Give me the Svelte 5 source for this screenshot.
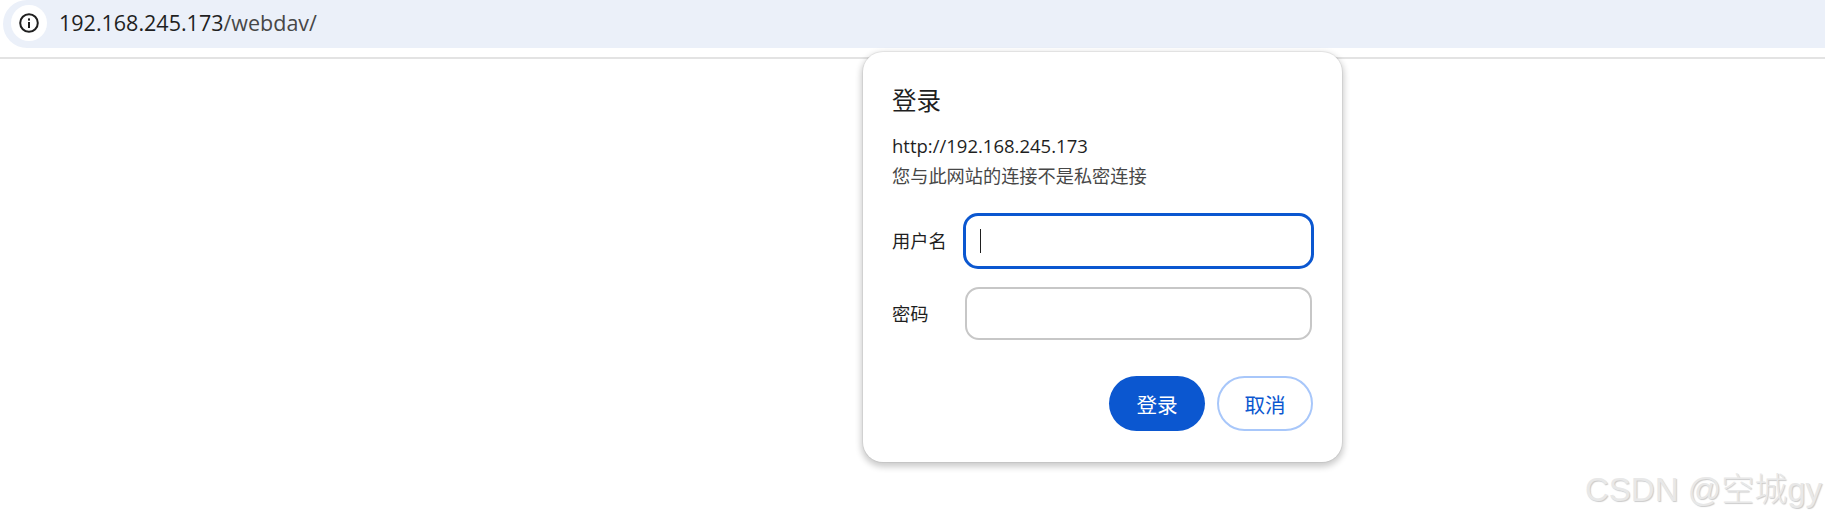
<script>
  const fields = [
    { label: '用户名', focused: true },
    { label: '密码', focused: false }
  ];
</script>

<div class="page">
  <header class="toolbar">
    <div class="omnibox">
      <span class="chip">
        <svg width="24" height="24" viewBox="0 0 24 24" fill="none" aria-hidden="true">
          <circle cx="12" cy="12" r="8.8" stroke="#1f1f1f" stroke-width="2" />
          <rect x="11" y="11" width="2" height="6" fill="#1f1f1f" />
          <rect x="11" y="7.4" width="2" height="2.2" fill="#1f1f1f" />
        </svg>
      </span>
      <span class="url"><span class="host">192.168.245.173</span><span class="path">/webdav/</span></span>
    </div>
  </header>

  <section class="dialog">
    <h1>登录</h1>
    <p class="origin">http://192.168.245.173</p>
    <p class="note">您与此网站的连接不是私密连接</p>
    <div class="fields">
      {#each fields as f}
        <div class="row">
          <span class="label">{f.label}</span>
          <div class="input" class:focused={f.focused}>
            {#if f.focused}<span class="caret"></span>{/if}
          </div>
        </div>
      {/each}
    </div>
    <div class="actions">
      <button class="primary">登录</button>
      <button class="secondary">取消</button>
    </div>
  </section>

  <div class="watermark">CSDN @空城gy</div>
</div>

<style>
  :global(body) {
    margin: 0;
    background: #fff;
  }
  .page {
    position: relative;
    width: 1825px;
    height: 523px;
    overflow: hidden;
    font-family: "Open Sans", "Noto Sans CJK SC", sans-serif;
    color: #1f1f1f;
  }
  .toolbar {
    height: 57px;
    border-bottom: 2px solid #e3e3e3;
    padding-left: 3px;
  }
  .omnibox {
    height: 48px;
    background: #ebf0f9;
    border-radius: 24px 0 0 24px;
    display: flex;
    align-items: center;
    padding-left: 8px;
  }
  .chip {
    width: 36px;
    height: 36px;
    margin-top: -2px;
    border-radius: 50%;
    background: #fff;
    display: flex;
    align-items: center;
    justify-content: center;
  }
  .url {
    margin: -2px 0 0 12px;
    font-size: 21.5px;
    line-height: 28px;
  }
  .host { color: #1f1f1f; }
  .path { color: #474747; }

  .dialog {
    position: absolute;
    left: 863px;
    top: 52px;
    width: 479px;
    height: 410px;
    box-sizing: border-box;
    padding: 33px 29px 0 29px;
    background: #fff;
    border-radius: 20px;
    box-shadow: 0 0 0 1px rgba(0, 0, 0, 0.05), 0 3px 6px 2px rgba(0, 0, 0, 0.2);
  }
  h1 {
    margin: 0;
    font-size: 24.5px;
    line-height: 32px;
    font-weight: 400;
  }
  p { margin: 0; }
  .origin {
    margin-top: 16px;
    font-size: 18.5px;
    line-height: 26px;
  }
  .note {
    margin-top: 4px;
    font-size: 18.2px;
    line-height: 26px;
    color: #474747;
  }
  .fields {
    margin-top: 25px;
    display: flex;
    flex-direction: column;
    gap: 19.5px;
  }
  .row {
    display: flex;
    align-items: flex-start;
    height: 53px;
  }
  .label {
    width: 73px;
    font-size: 18.3px;
    line-height: 53px;
  }
  .input {
    width: 347px;
    height: 53px;
    box-sizing: border-box;
    border: 2px solid #c7c7c7;
    border-radius: 14px;
    display: flex;
    align-items: center;
    padding-left: 14px;
  }
  .input.focused {
    width: 351px;
    height: 56px;
    margin: -1px -2px 0 -2px;
    border: 3px solid #0b57d0;
    border-radius: 15px;
  }
  .caret {
    width: 1px;
    height: 24px;
    background: #1f1f1f;
  }
  .actions {
    margin-top: 36.5px;
    display: flex;
    justify-content: flex-end;
    gap: 12px;
  }
  button {
    width: 96px;
    height: 55px;
    box-sizing: border-box;
    border-radius: 28px;
    font-family: inherit;
    font-size: 20.6px;
    padding: 0;
  }
  .primary {
    background: #0b57d0;
    border: none;
    color: #fff;
  }
  .secondary {
    background: #fff;
    border: 2px solid #a8c7fa;
    color: #0b57d0;
  }
  .watermark {
    position: absolute;
    left: 1585px;
    top: 470px;
    font-family: "Liberation Sans", "Noto Sans CJK SC", sans-serif;
    font-size: 33px;
    line-height: 40px;
    font-weight: 300;
    white-space: nowrap;
    color: #e8e8e8;
    text-shadow: 1px 1px 1px #cbcbcb;
  }
</style>
